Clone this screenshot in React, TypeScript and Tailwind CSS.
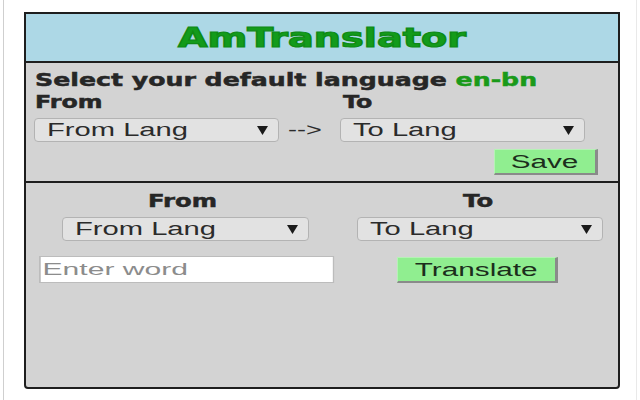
import React from "react";

const bold = "font-['DejaVu_Sans',sans-serif] font-bold";
const regular = "font-['Liberation_Sans',Arial,sans-serif]";

function Arrow() {
  return (
    <svg width="11" height="9" viewBox="0 0 11 9" className="shrink-0">
      <polygon points="0,0 11,0 5.5,9" fill="#1a1a1a" />
    </svg>
  );
}

function LangSelect({ label, className }: { label: string; className: string }) {
  return (
    <div
      className={`h-[24px] flex items-center justify-between pl-[12px] pr-[10px] bg-[#e2e2e2] border border-[#b3b3b3] rounded-[4px] ${className}`}
    >
      <span className={`inline-block origin-left scale-x-[1.62] text-[18px] leading-none text-[#2b2b2b] ${regular}`}>
        {label}
      </span>
      <Arrow />
    </div>
  );
}

function GreenButton({ label, className }: { label: string; className: string }) {
  return (
    <button
      className={`h-[26px] flex items-center justify-center bg-[#90ee90] border-t border-l border-t-[#b6f2b6] border-l-[#b6f2b6] border-r-[3px] border-b-2 border-r-[#8a8a8a] border-b-[#8a8a8a] ${className}`}
    >
      <span className={`inline-block scale-x-[1.65] text-[18px] leading-none text-[#1c2e1c] ${regular}`}>
        {label}
      </span>
    </button>
  );
}

export default function App() {
  return (
    <div className="relative w-[640px] h-[400px] bg-white overflow-hidden pt-[12px] pl-[24px]">
      <div className="absolute left-[3px] top-0 h-full w-px bg-[#cfcfcf]" />
      <div className="absolute left-[636px] top-0 h-full w-px bg-[#e9e9e9]" />

      <div className="w-[596px] h-[377px] flex flex-col bg-[#d3d3d3] border-2 border-[#1e1e1e] rounded-b-[4px] overflow-hidden">
        {/* header */}
        <div className="h-[49px] shrink-0 flex items-center justify-center bg-[#add8e6] border-b-2 border-[#1e1e1e]">
          <span
            className={`inline-block scale-x-[1.47] text-[26px] leading-none text-[#139b1b] [-webkit-text-stroke:1.2px_#0f8a16] ${bold}`}
          >
            AmTranslator
          </span>
        </div>

        {/* default language */}
        <div className="pt-[6px]">
          <div className="h-[22px] pl-[9px] leading-[22px]">
            <span
              className={`inline-block origin-left scale-x-[1.4] text-[18px] text-[#262626] [-webkit-text-stroke:0.5px_#262626] ${bold}`}
            >
              Select your default language{" "}
              <span className="text-[#1a9a1a] [-webkit-text-stroke:0.5px_#1a9a1a]">en-bn</span>
            </span>
          </div>
          <div className="h-[22px] flex leading-[22px]">
            <div className="w-[317px] pl-[9px]">
              <span
                className={`inline-block origin-left scale-x-[1.32] text-[18px] text-[#262626] [-webkit-text-stroke:0.5px_#262626] ${bold}`}
              >
                From
              </span>
            </div>
            <div>
              <span
                className={`inline-block origin-left scale-x-[1.32] text-[18px] text-[#262626] [-webkit-text-stroke:0.5px_#262626] ${bold}`}
              >
                To
              </span>
            </div>
          </div>
          <div className="mt-[5px] flex items-center pl-[8px]">
            <LangSelect label="From Lang" className="w-[245px]" />
            <div className="w-[61px] pl-[9px]">
              <span className={`inline-block origin-left scale-x-[1.5] text-[18px] leading-none text-[#2b2b2b] ${regular}`}>
                --&gt;
              </span>
            </div>
            <LangSelect label="To Lang" className="w-[245px]" />
          </div>
          <div className="mt-[7px] flex justify-end pr-[20px]">
            <GreenButton label="Save" className="w-[104px]" />
          </div>
        </div>

        {/* translate */}
        <div className="mt-[6px] border-t-2 border-[#1e1e1e] pt-[7px]">
          <div className="h-[22px] flex leading-[22px]">
            <div className="ml-[10px] w-[294px] text-center">
              <span
                className={`inline-block scale-x-[1.35] text-[18px] text-[#262626] [-webkit-text-stroke:0.5px_#262626] ${bold}`}
              >
                From
              </span>
            </div>
            <div className="ml-[10px] w-[276px] text-center">
              <span
                className={`inline-block scale-x-[1.35] text-[18px] text-[#262626] [-webkit-text-stroke:0.5px_#262626] ${bold}`}
              >
                To
              </span>
            </div>
          </div>
          <div className="mt-[5px] flex">
            <LangSelect label="From Lang" className="ml-[36px] w-[247px]" />
            <LangSelect label="To Lang" className="ml-[48px] w-[246px]" />
          </div>
          <div className="mt-[15px] flex items-start">
            <div className="ml-[13px] w-[295px] h-[27px]">
              <input
                type="text"
                placeholder="Enter word"
                className={`w-[167px] h-[27px] origin-left scale-x-[1.77] bg-white border border-[#bcbcbc] pl-[1px] text-[17px] text-[#2b2b2b] placeholder:text-[#8c8c8c] outline-none ${regular}`}
              />
            </div>
            <GreenButton label="Translate" className="ml-[63px] mt-[1px] w-[161px]" />
          </div>
        </div>
      </div>
    </div>
  );
}
